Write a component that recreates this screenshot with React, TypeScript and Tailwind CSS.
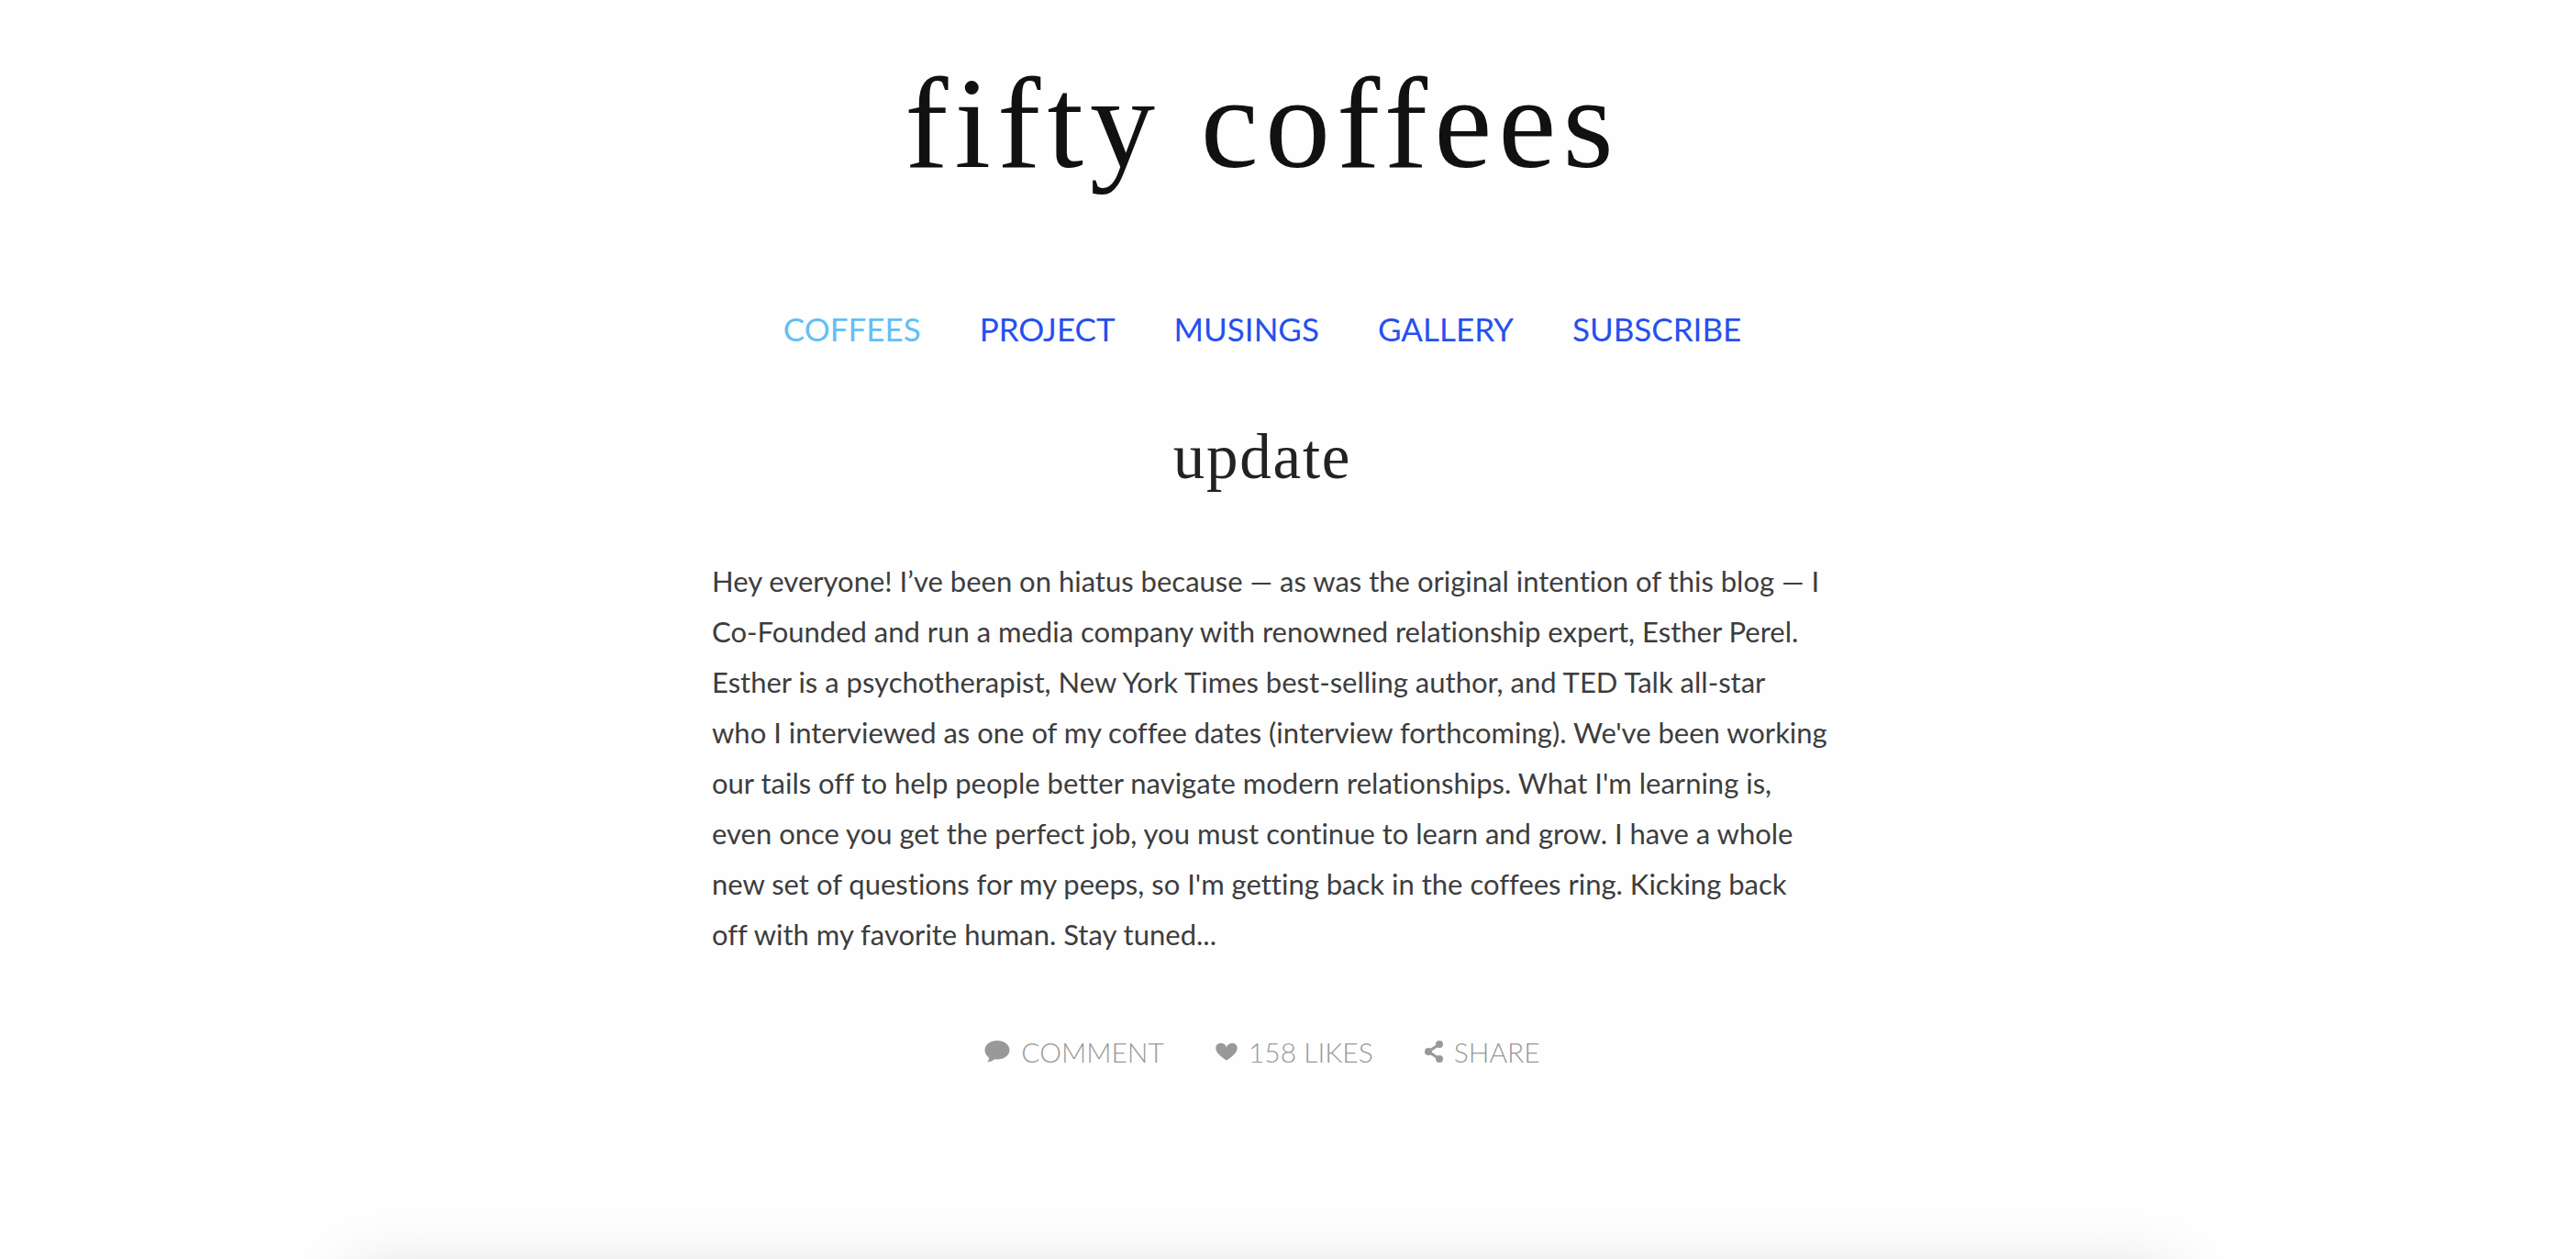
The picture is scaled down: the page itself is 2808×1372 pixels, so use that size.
const links = ["Project", "Musings", "Gallery", "Subscribe"];

const lines = [
  "Hey everyone! I’ve been on hiatus because — as was the original intention of this blog — I",
  "Co-Founded and run a media company with renowned relationship expert, Esther Perel.",
  "Esther is a psychotherapist, New York Times best-selling author, and TED Talk all-star",
  "who I interviewed as one of my coffee dates (interview forthcoming). We've been working",
  "our tails off to help people better navigate modern relationships. What I'm learning is,",
  "even once you get the perfect job, you must continue to learn and grow. I have a whole",
  "new set of questions for my peeps, so I'm getting back in the coffees ring. Kicking back",
  "off with my favorite human. Stay tuned...",
];

function CommentIcon() {
  return (
    <svg className="h-6 w-7" viewBox="0 0 28 24" fill="currentColor" aria-hidden="true">
      <path d="M14 0C21.700 0 27.500 4.600 27.500 10.300S21.700 20.500 14 20.500c-1 0-2-.1-2.900-.2C9 22 6.300 23.300 3.200 23.500c1.100-1.300 1.900-2.900 2-4.800C2.200 16.800.500 13.800.500 10.300.500 4.600 6.300 0 14 0Z" />
    </svg>
  );
}

function HeartIcon() {
  return (
    <svg className="h-6 w-6" viewBox="0 0 24 24" fill="currentColor" aria-hidden="true">
      <path d="M12 21.500C7.500 18.800.300 13.500.300 8.200.300 4.900 2.800 2.800 5.800 2.800c2.900 0 5.200 1.700 6.200 4.400 1-2.700 3.300-4.400 6.200-4.400 3 0 5.500 2.100 5.500 5.400 0 5.300-7.200 10.600-11.700 13.300Z" />
    </svg>
  );
}

function ShareIcon() {
  return (
    <svg className="h-6 w-5" viewBox="0 0 20 24" fill="currentColor" aria-hidden="true">
      <path d="M16 4 4 12l12 8" fill="none" stroke="currentColor" strokeWidth="3" />
      <circle cx="16" cy="4" r="4" />
      <circle cx="4" cy="12" r="4" />
      <circle cx="16" cy="20" r="4" />
    </svg>
  );
}

export default function App() {
  return (
    <div className="flex min-h-screen flex-col overflow-hidden bg-[#fefefe] pr-14 font-['Lato',sans-serif]">
      <div className="mx-auto flex w-full max-w-[1200px] flex-col items-center pt-10">
        <header className="flex flex-col items-center">
          <a href="#" className="font-['Liberation_Serif',serif] text-[142px] leading-[188px] tracking-wider text-[#111]">
            fifty coffees
          </a>
          <nav className="mt-[98px] flex gap-16 text-[35px] leading-[64px] text-[#2650ee] uppercase">
            <a href="#" className="text-[#63bff5]">Coffees</a>
            {links.map((label) => (
              <a key={label} href="#">{label}</a>
            ))}
          </nav>
        </header>
        <main className="mt-[60px] flex w-full flex-col items-center">
          <h1 className="font-['Liberation_Serif',serif] text-[69px] leading-[96px] tracking-wide text-[#222]">update</h1>
          <p className="mt-[60px] w-full text-[31px] leading-[55px] whitespace-nowrap text-[#3d3d3d] [font-variant-ligatures:none]">
            {lines.map((line) => (
              <span key={line} className="block">{line}</span>
            ))}
          </p>
          <div className="mt-[72px] flex gap-14 text-[30px] leading-[56px] font-light text-[#999] uppercase">
            <a href="#" className="flex items-center gap-3">
              <CommentIcon />
              Comment
            </a>
            <button type="button" className="flex items-center gap-3 uppercase">
              <HeartIcon />
              158 Likes
            </button>
            <button type="button" className="flex items-center gap-3 uppercase">
              <ShareIcon />
              Share
            </button>
          </div>
        </main>
      </div>
      <footer className="mx-auto mt-auto -mb-[112px] h-24 w-full max-w-[1984px] shrink-0 bg-[#f0f0f0] shadow-[0_0_70px_rgba(0,0,0,0.15)]" />
    </div>
  );
}
